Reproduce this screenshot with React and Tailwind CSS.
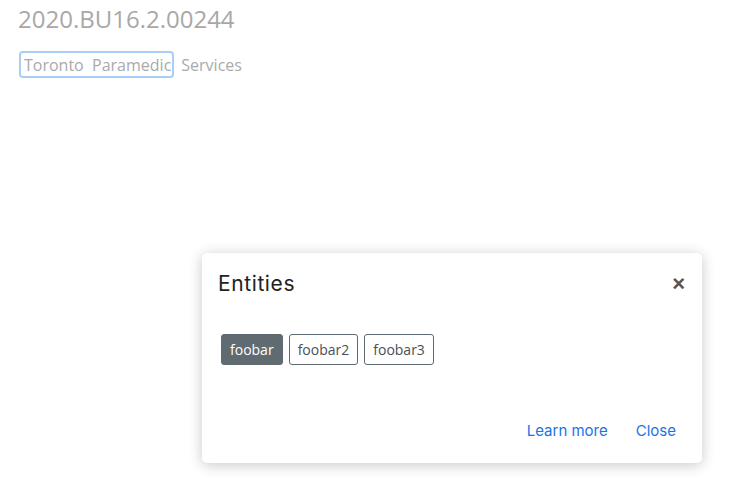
import React from "react";

const tags = [
  { label: "foobar", active: true },
  { label: "foobar2", active: false },
  { label: "foobar3", active: false },
];

export default function App() {
  return (
    <div className="relative w-[736px] h-[492px] bg-white overflow-hidden font-['Open_Sans',sans-serif]">
      <div className="px-[18px] pt-[3px]">
        <h1 className="text-[24px] leading-[32px] text-[#a8a8a8]">2020.BU16.2.00244</h1>
        <div className="mt-[16px] flex items-center text-[16px] text-[#aaaaaa]">
          <span className="inline-flex items-center h-[27px] pl-[3px] pr-[1px] ml-[1px] rounded-[4px] border-2 border-[#a9cff8]">
            Toronto&nbsp; Paramedic
          </span>
          <span className="ml-[7px]">Services</span>
        </div>
      </div>

      {/* popover */}
      <div className="absolute left-[202px] top-[253px] w-[500px] h-[210px] bg-white rounded-[5px] shadow-[0_2px_14px_rgba(0,0,0,0.22)] flex flex-col">
        <div className="flex items-center justify-between pl-[16px] pr-[17px] pt-[19px]">
          <h2 className="text-[21px] leading-[24px] tracking-[0.6px] text-[#222] font-['Inter',sans-serif] font-normal">Entities</h2>
          <span className="text-[22px] leading-[22px] font-bold text-[#555] font-['Liberation_Sans',sans-serif]">×</span>
        </div>
        <div className="flex gap-[6px] pl-[19px] mt-[38px]">
          {tags.map((t) => (
            <span
              key={t.label}
              className={`inline-flex items-center h-[31px] px-[8px] rounded-[3px] border text-[14px] ${t.active ? "bg-[#5f6a71] border-[#5f6a71] text-white" : "bg-white border-[#5f6a71] text-[#4a4f53]"}`}
            >
              {t.label}
            </span>
          ))}
        </div>
        <div className="mt-auto flex justify-end gap-[28px] pr-[26px] pb-[21px] text-[15px] text-[#1a73e8] font-['Inter',sans-serif]">
          <span>Learn more</span>
          <span>Close</span>
        </div>
      </div>
    </div>
  );
}
